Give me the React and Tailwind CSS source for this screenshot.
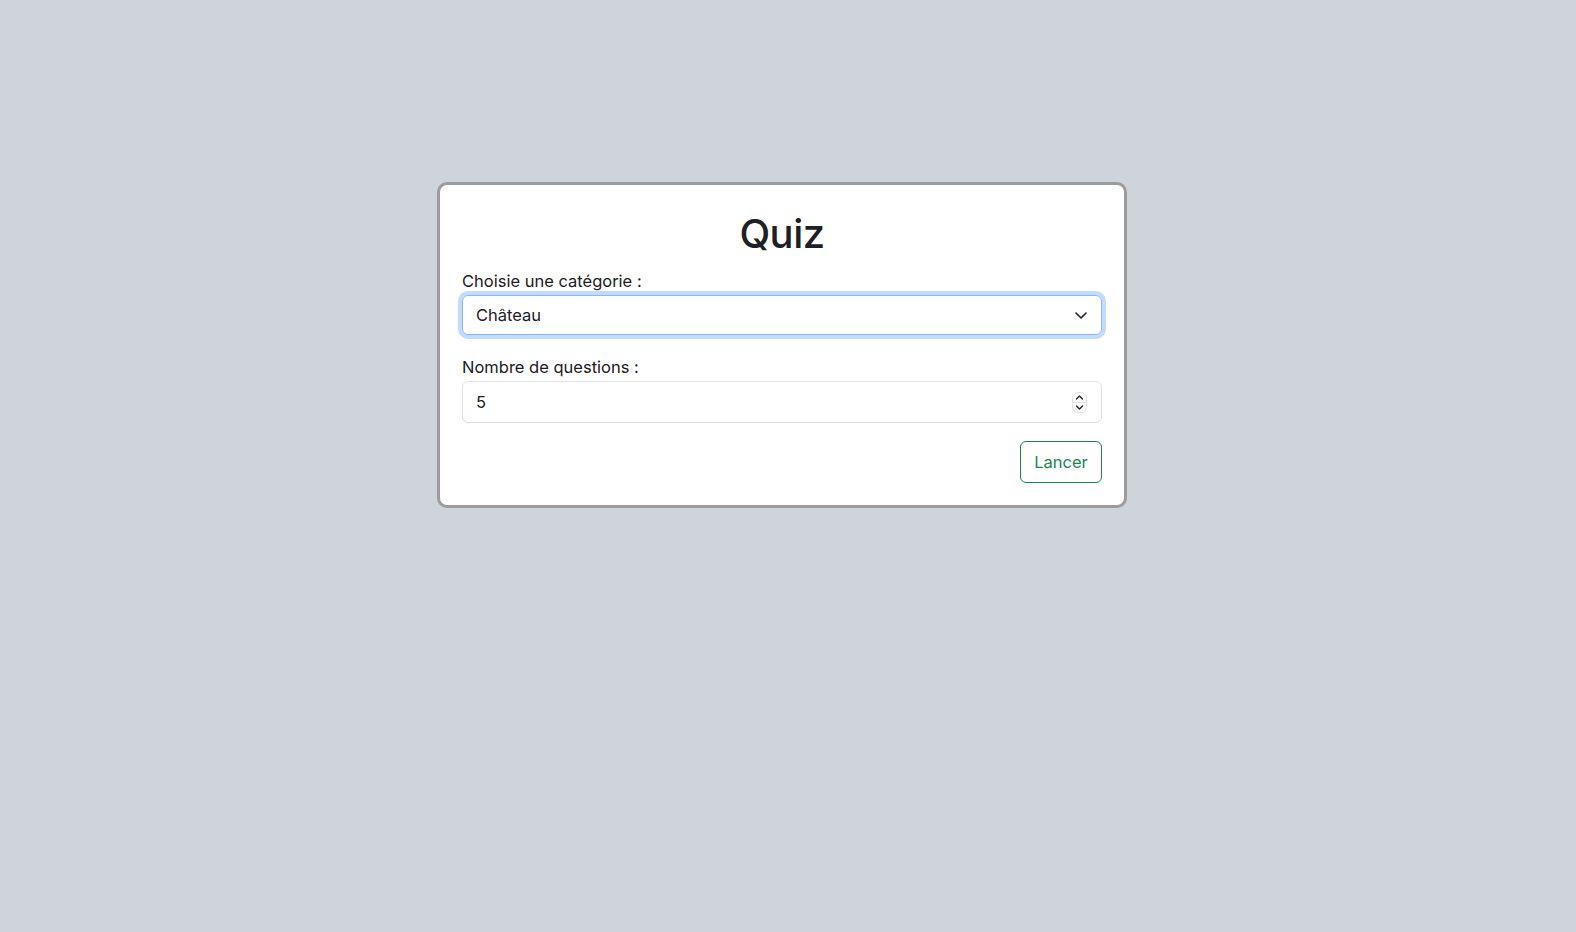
import React from "react";

export default function App() {
  return (
    <div
      className="min-h-[932px] w-full bg-[#cfd4db] pt-[182px] pl-[437px] text-[#1d2024]"
      style={{ fontFamily: "Inter, 'Noto Sans', sans-serif" }}
    >
      <div className="w-[690px] rounded-[10px] border-[3px] border-[#9c9c9c] bg-white px-[22px] pt-[25px] pb-[22px]">
        <h1 className="text-center text-[40px] font-medium leading-[48px] tracking-[-0.5px]">Quiz</h1>
        <div className="mt-[11px] text-[16.5px] leading-[24px]">Choisie une catégorie :</div>
        <div className="mt-[2px] flex h-[40px] items-center justify-between rounded-[6px] border border-[#86b7fe] pl-[13px] pr-[13px] text-[16.5px] shadow-[0_0_0_4px_rgba(13,110,253,0.25)]">
          <span>Château</span>
          <svg width="14" height="10" viewBox="0 0 14 10" fill="none">
            <path d="M2 3l5 5 5-5" stroke="#212529" strokeWidth="1.6" strokeLinecap="round" strokeLinejoin="round" />
          </svg>
        </div>
        <div className="mt-[20px] text-[16.5px] leading-[24px]">Nombre de questions :</div>
        <div className="mt-[2px] flex h-[42px] items-center justify-between rounded-[6px] border border-[#dee2e6] pl-[13px] pr-[14px] text-[16.5px]">
          <span>5</span>
          <div className="flex h-[21px] w-[15px] flex-col items-center justify-center rounded-[6px] border border-[#e3e3e3] bg-white">
            <svg width="9" height="9" viewBox="0 0 9 9" fill="none">
              <path d="M1.5 6l3-3 3 3" stroke="#222" strokeWidth="1.4" strokeLinecap="round" strokeLinejoin="round" />
            </svg>
            <div className="h-px w-full bg-[#e3e3e3]" />
            <svg width="9" height="9" viewBox="0 0 9 9" fill="none">
              <path d="M1.5 3l3 3 3-3" stroke="#222" strokeWidth="1.4" strokeLinecap="round" strokeLinejoin="round" />
            </svg>
          </div>
        </div>
        <div className="mt-[18px] flex justify-end">
          <button className="h-[42px] w-[82px] rounded-[6px] border border-[#198754] text-[16.5px] text-[#198754]">
            Lancer
          </button>
        </div>
      </div>
    </div>
  );
}
